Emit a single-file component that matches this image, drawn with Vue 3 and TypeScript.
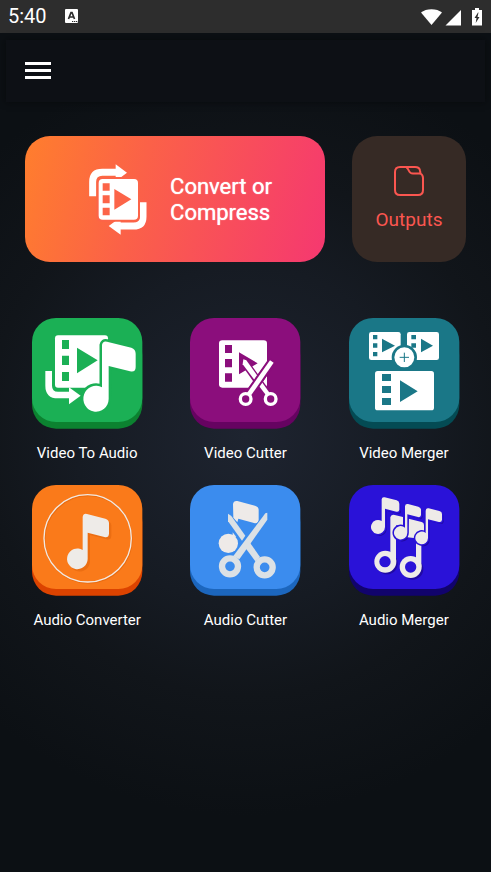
<script setup lang="ts">
interface Tool {
  id: string
  label: string
  face: string
  base: string
}

const tools: Tool[] = [
  { id: 'video-to-audio', label: 'Video To Audio', face: '#1bb055', base: '#0c8230' },
  { id: 'video-cutter', label: 'Video Cutter', face: '#8b0e7c', base: '#660361' },
  { id: 'video-merger', label: 'Video Merger', face: '#1a7787', base: '#044b54' },
  { id: 'audio-converter', label: 'Audio Converter', face: '#fa7a1a', base: '#dc4300' },
  { id: 'audio-cutter', label: 'Audio Cutter', face: '#3b8cee', base: '#1c66bd' },
  { id: 'audio-merger', label: 'Audio Merger', face: '#2a12d8', base: '#11036c' },
]
</script>

<template>
  <div class="screen">
    <div class="status">
      <span class="time">5:40</span>
      <svg class="badge" viewBox="0 0 14 15" aria-hidden="true">
        <rect width="13" height="14" rx="1" fill="#fff" />
        <path d="M3.5 10 6 3.5h1L9.500 10M4.500 8h4" fill="none" stroke="#2d2d2d" stroke-width="1.700" />
        <path d="M7 12.500h1.300M9 12.500h1.300M11 12.500h1.300" stroke="#2d2d2d" stroke-width="1.200" />
      </svg>
      <svg class="signals" viewBox="0 0 62 18" aria-hidden="true">
        <path d="M0 4.500C5 0 16 0 21 4.500L10.500 17Z" fill="#fff" />
        <path d="M24.500 17.500 40 2v15.500Z" fill="#fff" />
        <path d="M51 2h3V0h4v2h3v15.500H51Z" fill="#fff" />
        <path d="M57 4.500 53.500 10h2l-.8 5 3.800-6h-2l1-4.500Z" fill="#2d2d2d" />
      </svg>
    </div>

    <header class="bar">
      <button class="menu" type="button" aria-label="Menu">
        <i></i><i></i><i></i>
      </button>
    </header>

    <main>
      <section class="top">
        <button class="convert" type="button">
          <svg viewBox="205 113 180 216" aria-hidden="true">
            <g fill="none" stroke="#fff" stroke-width="21">
              <path d="M219 213V170Q219 141 248 141H292" />
              <path d="M370 231V274Q370 302 341 302H300" />
            </g>
            <path d="M288 117 322 142 288 168ZM303 276 267 302 303 328Z" fill="#fff" />
            <path d="M231 169Q231 155 245 155H347Q361 155 361 169V275Q361 289 347 289H245Q231 289 231 275Z" fill="#fc6448" />
            <path fill-rule="evenodd" fill="#fff" d="M249 161H343Q355 161 355 173V271Q355 283 343 283H249Q237 283 237 271V173Q237 161 249 161ZM249 174V196H270V174ZM249 210V234H270V210ZM249 247V270H270V247ZM284 191V253L335 222Z" />
          </svg>
          <span>Convert or<br />Compress</span>
        </button>
        <button class="outputs" type="button">
          <svg viewBox="0 0 30 30" fill="none" stroke="#fb5650" stroke-width="2" stroke-linejoin="round" aria-hidden="true">
            <path d="M6 1H21Q25.500 1 26 4.500L26.500 7.500Q29 9 29 12V24Q29 29 24 29H6Q1 29 1 24V6Q1 1 6 1Z" />
            <path d="M12.500 1.500Q14 2.500 15 5 16 7.500 19 7.500H26.500" />
          </svg>
          <span>Outputs</span>
        </button>
      </section>

      <section class="grid">
        <button v-for="tool in tools" :key="tool.id" class="tool" type="button">
          <svg viewBox="0 0 336 336" aria-hidden="true">
            <rect x="3" y="43" width="331" height="292" rx="72" :fill="tool.base" />
            <rect x="3" y="3" width="331" height="312" rx="72" :fill="tool.face" />

            <g v-if="tool.id === 'video-to-audio'" transform="translate(-33 -36)">
              <rect x="105" y="91" width="159" height="157" rx="9" fill="#fff" />
              <path :fill="tool.face" d="M126 105h21v27h-21ZM126 152h21v28h-21ZM126 201h21v27h-21ZM171 128 233 166 171 205Z" />
              <g fill="#fff" :stroke="tool.face" stroke-width="15" paint-order="stroke">
                <path d="M246 120Q248 107 261 110L334 128Q347 132 347 146V186Q347 203 330 199L266 183V282A38 39 0 1 1 246 247Z" />
              </g>
              <path d="M86 198V242Q86 270 114 270H150" fill="none" stroke="#fff" stroke-width="20" />
              <path d="M147 247 182 272 147 298Z" fill="#fff" />
            </g>

            <g v-else-if="tool.id === 'video-cutter'" transform="translate(-33 -36)">
              <rect x="123" y="106" width="144" height="142" rx="10" fill="#fff" />
              <path :fill="tool.face" d="M141 120h21v24h-21ZM141 162h21v25h-21ZM141 205h21v25h-21ZM183 142 239 175 183 208Z" />
              <g fill="none" :stroke="tool.face" stroke-width="24">
                <path d="M199 171 269 269M278 176 214 267" />
              </g>
              <path d="M196 163 205 166 275 264 264 271 194 178Z" fill="#fff" />
              <path d="M276 166 287 173 220 270 207 264Z" fill="#fff" :stroke="tool.face" stroke-width="12" paint-order="stroke" />
              <g :fill="tool.face" stroke="#fff" stroke-width="10">
                <circle cx="203" cy="282" r="16" />
                <circle cx="278" cy="282" r="16" />
              </g>
            </g>

            <g v-else-if="tool.id === 'video-merger'" transform="translate(-36 -36)">
              <g fill="#fff">
                <rect x="99" y="81" width="95" height="84" rx="7" />
                <rect x="213" y="81" width="96" height="84" rx="7" />
                <rect x="117" y="198" width="177" height="118" rx="8" />
              </g>
              <path :fill="tool.face" d="M111 90h13v13h-13ZM111 115h13v13h-13ZM111 141h13v13h-13ZM138 101 177 122 138 142ZM226 90h14v13h-14ZM226 115h14v13h-14ZM255 101 291 122 255 142ZM138 207h27v21h-27ZM138 243h27v21h-27ZM138 279h27v21h-27ZM192 226 245 259 192 291Z" />
              <circle cx="205" cy="157" r="34" fill="#fff" :stroke="tool.face" stroke-width="8" />
              <path d="M191 157h28M205 143v28" :stroke="tool.face" stroke-width="3" />
            </g>

            <g v-else-if="tool.id === 'audio-converter'" transform="translate(-33 -27)">
              <g fill="none" stroke-width="4">
                <circle cx="205" cy="193" r="131" stroke="#e96c10" />
                <circle cx="203" cy="190" r="131" stroke="#f1e9e3" />
              </g>
              <path d="M195 133Q197 121 208 124L263 138Q274 142 274 151V183Q273 196 260 193L210 180V258A31 31 0 1 1 195 232Z" fill="#ec6e12" />
              <path d="M188 126Q190 114 201 117L256 131Q267 135 267 144V176Q266 189 253 186L203 173V252A31 31 0 1 1 188 225Z" fill="#eeebe8" />
            </g>

            <g v-else-if="tool.id === 'audio-cutter'" transform="translate(-33 -27)">
              <g fill="#eeeae8">
                <path d="M165 87Q167 76 178 78L231 92Q242 95 242 105V136Q240 147 228 144L181 131 178 142 166 128Z" />
                <circle cx="151" cy="205" r="29" />
                <path d="M164 184V172L175 186Z" />
              </g>
              <g fill="#dce1e5">
                <path d="M150 116 160 123 202 182 192 197 150 139Z" />
                <path d="M262 115 268 113V134L184 253 166 243Z" :stroke="tool.face" stroke-width="5" paint-order="stroke" />
                <path d="M203 220 216 203 246 246 232 259Z" />
              </g>
              <g :fill="tool.face" stroke="#dce1e5" stroke-width="19">
                <circle cx="156" cy="274" r="24" />
                <circle cx="260" cy="277" r="24" />
              </g>
            </g>

            <g v-else transform="translate(-36 -27)">
              <g fill="#2009a4" transform="translate(5 6)">
                <path d="M137 73Q138 65 146 67L182 76Q190 79 190 86V104Q189 112 181 110L147 101V156A21 21 0 1 1 137 138Z" />
                <path d="M207 94Q208 85 216 87L247 95Q255 98 255 104V120Q254 128 246 126L214 118V173A20 20 0 1 1 207 158Z" />
                <path d="M269 107Q270 98 278 100L310 108Q318 110 318 117V134Q317 143 309 141L276 133V189A19 19 0 1 1 269 174Z" />
                <circle cx="148" cy="260" r="32" />
                <circle cx="225" cy="276" r="32" />
              </g>
              <g fill="#eeebe8">
                <path d="M163 127Q165 117 176 120L201 126V155L180 151V260H163Z" />
                <path d="M218 131 257 141Q264 143 264 150V178Q260 192 256 192V276H240V190L214 187Z" />
                <circle cx="148" cy="260" r="33" />
                <circle cx="224" cy="276" r="33" />
              </g>
              <g :fill="tool.face">
                <circle cx="147" cy="260" r="17" />
                <circle cx="224" cy="276" r="17" />
              </g>
              <g fill="#eeebe8" :stroke="tool.face" stroke-width="9" paint-order="stroke">
                <path d="M137 73Q138 65 146 67L182 76Q190 79 190 86V104Q189 112 181 110L147 101V156A21 21 0 1 1 137 138Z" />
                <path d="M207 94Q208 85 216 87L247 95Q255 98 255 104V120Q254 128 246 126L214 118V173A20 20 0 1 1 207 158Z" />
                <path d="M269 107Q270 98 278 100L310 108Q318 110 318 117V134Q317 143 309 141L276 133V189A19 19 0 1 1 269 174Z" />
              </g>
            </g>
          </svg>
          <span>{{ tool.label }}</span>
        </button>
      </section>
    </main>
  </div>
</template>

<style>
body {
  margin: 0;
  background: #0c0f13;
}
</style>

<style scoped>
.screen {
  box-sizing: border-box;
  min-height: 100vh;
  color: #fff;
  font-family: Roboto, "Liberation Sans", sans-serif;
  background: radial-gradient(circle at center, #1e2430 0, #161b23 170px, #11151a 260px, #0c1014 380px);
}

button {
  box-sizing: border-box;
  padding: 0;
  border: 0;
  background: none;
  color: inherit;
  font: inherit;
  cursor: pointer;
}

svg {
  display: block;
}

.status {
  display: flex;
  align-items: center;
  height: 33px;
  padding: 0 8px;
  background: #2d2d2d;
}

.time {
  font-size: 20px;
  line-height: 33px;
}

.badge {
  width: 14px;
  height: 15px;
  margin-left: 18px;
}

.signals {
  width: 62px;
  height: 18px;
  margin-left: auto;
}

.bar {
  display: flex;
  align-items: center;
  height: 61px;
  margin: 7px 6px 0;
  padding: 0 19px 1px;
  background: #0d1015;
  box-shadow: 0 0 7px rgba(6, 7, 9, 0.7);
}

.menu {
  display: grid;
  gap: 4px;
  width: 26px;
}

.menu i {
  height: 3px;
  background: #fff;
}

.top {
  display: grid;
  grid-template-columns: 300fr 114fr;
  gap: 27px;
  padding: 34px 25px 0;
}

.convert,
.outputs {
  display: flex;
  align-items: center;
  justify-content: center;
  height: 126px;
  border-radius: 25px;
}

.convert {
  gap: 22px;
  padding-left: 10px;
  background: linear-gradient(105deg, #ff7e2d 0%, #fb6148 38%, #f53870 100%);
  font-size: 22px;
  line-height: 26px;
  text-align: left;
  text-shadow: 0 0 1px #fff;
}

.convert span {
  padding-top: 2px;
}

.convert svg {
  width: 60px;
  height: 72px;
}

.outputs {
  flex-direction: column;
  gap: 11px;
  background: #362a25;
  color: #fb5650;
  font-size: 19px;
  line-height: 26px;
}

.outputs svg {
  width: 30px;
  height: 30px;
}

.grid {
  display: grid;
  grid-template-columns: repeat(3, 1fr);
  row-gap: 21px;
  padding: 55px 8px 24px;
}

.tool {
  display: flex;
  flex-direction: column;
  align-items: center;
  gap: 14px;
  font-size: 15px;
  line-height: 20px;
}

.tool svg {
  width: 112px;
  height: 112px;
}
</style>
